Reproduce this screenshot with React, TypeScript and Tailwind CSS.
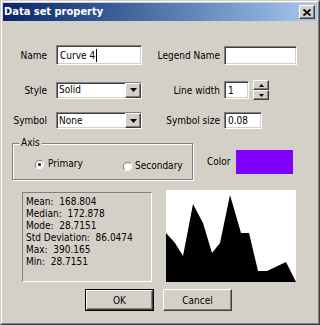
const raised =
  "border border-t-white border-l-white border-b-[#404040] border-r-[#404040] shadow-[inset_-1px_-1px_0_#808080,inset_1px_1px_0_#d4d0c8]";
const sunken =
  "border border-t-[#808080] border-l-[#808080] border-b-white border-r-white shadow-[inset_1px_1px_0_#404040,inset_-1px_-1px_0_#d4d0c8]";

const DownArrow = () => (
  <svg width="7" height="4" viewBox="0 0 7 4">
    <path d="M0 0h7L3.5 4z" fill="black" />
  </svg>
);

const Select = ({ value }: { value: string }) => (
  <div className={`${sunken} ml-[9px] flex h-[17px] w-[86px] items-center bg-white`}>
    <span className="flex-1 pl-[2px] leading-none">{value}</span>
    <div className={`${raised} flex h-[15px] w-[16px] items-center justify-center bg-[#d4d0c8]`}>
      <DownArrow />
    </div>
  </div>
);

const Radio = ({ checked }: { checked?: boolean }) => (
  <svg width="9" height="9" viewBox="0 0 12 12">
    <path d="M10.2 1.8A6 6 0 0 0 1.8 10.2" stroke="#808080" strokeWidth="1.4" fill="none" />
    <path d="M1.8 10.2A6 6 0 0 0 10.2 1.8" stroke="#ffffff" strokeWidth="1.4" fill="none" />
    <circle cx="6" cy="6" r="4.5" fill="white" />
    {checked && <circle cx="6" cy="6" r="2" fill="black" />}
  </svg>
);

const stats = [
  "Mean:  168.804",
  "Median:  172.878",
  "Mode:  28.7151",
  "Std Deviation:  86.0474",
  "Max:  390.165",
  "Min:  28.7151",
];

const App = () => {
  return (
    <div
      className="h-[325px] w-[320px] overflow-hidden border border-t-[#d4d0c8] border-l-[#d4d0c8] border-b-[#404040] border-r-[#404040] bg-[#d4d0c8] text-[10px] text-black"
      style={{ fontFamily: '"DejaVu Sans Condensed", "DejaVu Sans", Tahoma, sans-serif' }}
    >
      <div className="h-full w-full border border-t-white border-l-white border-b-[#808080] border-r-[#808080] p-[1px]">
        {/* title bar */}
        <div className="flex h-[18px] items-center justify-between bg-gradient-to-r from-[#0a246a] to-[#a6caf0] pl-[1px] pr-[2px]">
          <span className="text-[11px] font-bold text-white">Data set property</span>
          <div className={`${raised} flex h-[14px] w-[16px] items-center justify-center bg-[#d4d0c8]`}>
            <svg width="8" height="7" viewBox="0 0 8 7">
              <path d="M0.5 0.5l7 6M7.5 0.5l-7 6" stroke="black" strokeWidth="1.8" />
            </svg>
          </div>
        </div>

        {/* row 1 */}
        <div className="mt-[24px] flex h-[20px] items-center">
          <span className="w-[44px] text-right">Name</span>
          <div className={`${sunken} ml-[9px] flex h-[20px] w-[86px] items-center bg-white pl-[3px]`}>
            <span>Curve 4</span>
            <span className="ml-[1px] h-[13px] w-[1px] bg-black" />
          </div>
          <span className="w-[78px] text-right">Legend Name</span>
          <div className={`${sunken} ml-[4px] h-[19px] w-[73px] bg-white`} />
        </div>

        {/* row 2 */}
        <div className="mt-[15px] flex h-[20px] items-center">
          <span className="w-[44px] text-right">Style</span>
          <Select value="Solid" />
          <span className="w-[78px] text-right">Line width</span>
          <div className={`${sunken} ml-[4px] flex h-[18px] w-[25px] items-center bg-white pl-[3px]`}>1</div>
          <div className="ml-[4px] flex h-[20px] w-[16px] flex-col">
            <div className={`${raised} flex h-[10px] items-center justify-center bg-[#d4d0c8]`}>
              <svg width="5" height="3" viewBox="0 0 5 3">
                <path d="M0 3h5L2.5 0z" fill="black" />
              </svg>
            </div>
            <div className={`${raised} flex h-[10px] items-center justify-center bg-[#d4d0c8]`}>
              <svg width="5" height="3" viewBox="0 0 5 3">
                <path d="M0 0h5L2.5 3z" fill="black" />
              </svg>
            </div>
          </div>
        </div>

        {/* row 3 */}
        <div className="mt-[12px] flex h-[17px] items-center">
          <span className="w-[44px] text-right">Symbol</span>
          <Select value="None" />
          <span className="w-[78px] text-right">Symbol size</span>
          <div className={`${sunken} ml-[4px] flex h-[17px] w-[38px] items-center bg-white pl-[3px]`}>0.08</div>
        </div>

        {/* row 4 */}
        <div className="mt-[14px] flex items-center">
          <div className="relative ml-[9px] h-[37px] w-[181px] border border-[#808080] shadow-[1px_1px_0_white,inset_1px_1px_0_white]">
            <span className="absolute left-[6px] top-[-7px] bg-[#d4d0c8] px-[2px] leading-[12px]">Axis</span>
            <div className="flex items-start pt-[14px]">
              <div className="ml-[22px] flex w-[88px] items-center gap-[4px] leading-[12px]">
                <Radio checked />
                <span>Primary</span>
              </div>
              <div className="mt-[2px] flex items-center gap-[3px] leading-[12px]">
                <Radio />
                <span>Secondary</span>
              </div>
            </div>
          </div>
          <span className="ml-[14px]">Color</span>
          <div className="ml-[5px] h-[24px] w-[57px] bg-[#8000ff]" />
        </div>

        {/* row 5 */}
        <div className="mt-[10px] flex items-end">
          <div className="ml-[19px] h-[90px] w-[130px] border border-t-[#808080] border-l-[#808080] border-b-white border-r-white pl-[3px] pt-[3px]">
            {stats.map((s) => (
              <div key={s} className="h-[12px] whitespace-pre leading-[12px]">
                {s}
              </div>
            ))}
          </div>
          <svg className="ml-[14px] bg-white" width="130" height="92" viewBox="0 0 130 92">
            <polygon
              points="0,43 9,53 17,66 27,14 37,33 46,63 54,53 64,5 75,43 83,43 92,81 101,81 120,72 130,92 0,92"
              fill="black"
            />
          </svg>
        </div>

        {/* row 6 */}
        <div className="mt-[7px] flex">
          <div className="ml-[82px] h-[22px] w-[69px] border border-black">
            <div className={`${raised} flex h-full items-center justify-center bg-[#d4d0c8]`}>OK</div>
          </div>
          <div className={`${raised} ml-[9px] flex h-[22px] w-[69px] items-center justify-center bg-[#d4d0c8]`}>
            Cancel
          </div>
        </div>
      </div>
    </div>
  );
};

export default App;
